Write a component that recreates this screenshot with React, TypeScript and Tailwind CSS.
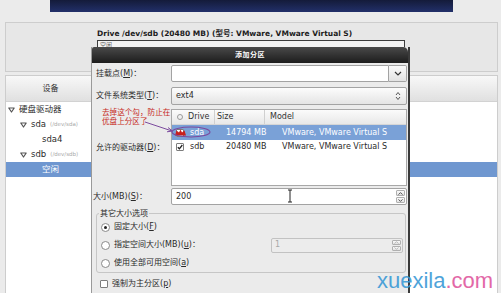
import React from "react";

const FONT = "font-['DejaVu_Sans','Noto_Sans_CJK_SC',sans-serif]";

function Tri() {
  return (
    <svg width="7" height="6" viewBox="0 0 7 6" className="shrink-0">
      <path d="M0.8 1h5.4L3.5 5z" fill="none" stroke="#555" strokeWidth="1.2" strokeLinejoin="round" />
    </svg>
  );
}

function ChevronDown() {
  return (
    <svg width="8" height="5" viewBox="0 0 8 5">
      <path d="M1 1l3 3 3-3" fill="none" stroke="#333" strokeWidth="1.2" />
    </svg>
  );
}

function UpDown() {
  return (
    <svg width="6" height="10" viewBox="0 0 6 10">
      <path d="M1 4l2-2.5L5 4M1 6l2 2.5L5 6" fill="none" stroke="#555" strokeWidth="1" />
    </svg>
  );
}

function SpinButtons({ disabled }: { disabled?: boolean }) {
  const c = disabled ? "#b5b5b5" : "#444";
  return (
    <div className="flex flex-col w-[9px] h-full mr-[1px] py-[1px] gap-[1px]">
      <div className="flex-1 flex items-center justify-center border border-[#b0b0b0] rounded-[1px] bg-gradient-to-b from-[#fbfbfb] to-[#e2e2e2]">
        <svg width="5" height="3" viewBox="0 0 5 3">
          <path d="M0.5 2.6L2.5 0.6l2 2" fill="none" stroke={c} strokeWidth="0.9" />
        </svg>
      </div>
      <div className="flex-1 flex items-center justify-center border border-[#b0b0b0] rounded-[1px] bg-gradient-to-b from-[#fbfbfb] to-[#e2e2e2]">
        <svg width="5" height="3" viewBox="0 0 5 3">
          <path d="M0.5 0.4L2.5 2.4l2-2" fill="none" stroke={c} strokeWidth="0.9" />
        </svg>
      </div>
    </div>
  );
}

function Check({ checked }: { checked?: boolean }) {
  return (
    <div className="w-[8px] h-[8px] border border-[#7d7d7d] bg-white rounded-[1px] flex items-center justify-center shrink-0">
      {checked && (
        <svg width="6" height="6" viewBox="0 0 6 6">
          <path d="M0.8 3.2l1.6 1.6L5.3 1" fill="none" stroke="#222" strokeWidth="1.3" />
        </svg>
      )}
    </div>
  );
}

function Radio({ on }: { on?: boolean }) {
  return (
    <div className="w-[9px] h-[9px] rounded-full border border-[#8a8a8a] bg-white flex items-center justify-center shrink-0">
      {on && <div className="w-[3px] h-[3px] rounded-full bg-[#222]" />}
    </div>
  );
}

function TreeRow({
  indent,
  tri,
  label,
  sub,
  selected,
}: {
  indent: number;
  tri?: boolean;
  label: string;
  sub?: string;
  selected?: boolean;
}) {
  return (
    <div className={`flex h-[15px] ${selected ? "bg-[#6f97d0]" : ""}`}>
      <div
        className={`w-[90px] flex items-center text-[8.5px] ${selected ? "text-white" : "text-[#2b2b2b]"}`}
        style={{ paddingLeft: indent }}
      >
        {tri && <Tri />}
        <span className={tri ? "ml-[4px]" : ""}>{label}</span>
        {sub && <span className="ml-[4px] text-[5.5px] text-[#a9a9a9]">{sub}</span>}
      </div>
      <div className="flex-1" />
    </div>
  );
}

export default function App() {
  return (
    <div className={`relative w-[501px] h-[293px] overflow-hidden bg-[#ebebeb] text-[#2a2a2a] ${FONT}`}>
      {/* top banner */}
      <div className="ml-[50px] w-[403px] h-[12px] bg-gradient-to-b from-[#141b3a] to-[#22306a]" />

      {/* upper panel */}
      <div className="mt-[10px] ml-[5px] w-[493px] h-[50px] border border-[#cdcdcd] bg-[#e7e7e7] pl-[91px] pt-[5px]">
        <div className="text-[7.5px] font-bold leading-[11px] text-[#1c1c1c] whitespace-nowrap">
          Drive /dev/sdb (20480 MB) (型号: VMware, VMware Virtual S)
        </div>
        <div className="mt-[1px] w-[308px] h-[20px] border border-[#3d3d3d] bg-[#f4f4f4] pl-[2px] text-[6px] leading-[7px] text-[#666]">
          空闲
        </div>
      </div>

      {/* lower panel */}
      <div className="mt-[3px] ml-[5px] w-[493px] h-[230px] border border-[#cdcdcd] bg-white">
        <div className="flex h-[26px] border-b border-[#d2d2d2] bg-gradient-to-b from-[#f8f8f8] to-[#e0e0e0]">
          <div className="w-[90px] border-r border-[#d0d0d0] flex items-center justify-center text-[8px] text-[#333]">
            设备
          </div>
          <div className="flex-1" />
        </div>
        <div className="flex flex-col">
          <TreeRow indent={2} tri label="硬盘驱动器" />
          <TreeRow indent={14} tri label="sda" sub="(/dev/sda)" />
          <TreeRow indent={36} label="sda4" />
          <TreeRow indent={14} tri label="sdb" sub="(/dev/sdb)" />
          <TreeRow indent={36} label="空闲" selected />
        </div>
      </div>

      {/* dialog */}
      <div className="absolute left-[91px] top-[47px] w-[319px] h-[250px] bg-[#ebebeb] border-l border-l-[#9a9a9a] border-r-2 border-r-[#3a3a3a]">
        <div className="h-[16px] rounded-tr-[5px] rounded-tl-[2px] bg-gradient-to-b from-[#4a4a4a] to-[#1d1d1d] flex items-center justify-center text-white text-[7px] font-bold tracking-[0.5px]">
          添加分区
        </div>
        <div className="pl-[4px] text-[8px]">
          {/* mount point */}
          <div className="mt-[2px] h-[17px] flex items-center">
            <div className="w-[75px] whitespace-nowrap">
              挂载点(<u>M</u>)：
            </div>
            <div className="flex w-[236px] h-full">
              <div className="flex-1 bg-white border border-[#a3a3a3] rounded-l-[2px]" />
              <div className="w-[18px] border border-l-0 border-[#a3a3a3] rounded-r-[2px] bg-gradient-to-b from-[#fafafa] to-[#e2e2e2] flex items-center justify-center">
                <ChevronDown />
              </div>
            </div>
          </div>
          {/* fs type */}
          <div className="mt-[5px] h-[18px] flex items-center">
            <div className="w-[75px] whitespace-nowrap">
              文件系统类型(<u>T</u>)：
            </div>
            <div className="flex items-center w-[236px] h-full border border-[#a3a3a3] rounded-[2px] bg-gradient-to-b from-[#fcfcfc] to-[#e4e4e4] pl-[4px] pr-[5px]">
              <span className="flex-1">ext4</span>
              <UpDown />
            </div>
          </div>
          {/* drives */}
          <div className="mt-[4px] h-[77px] flex items-center">
            <div className="w-[75px] whitespace-nowrap">
              允许的驱动器(<u>D</u>)：
            </div>
            <div className="w-[236px] h-full border border-[#a8a8a8] bg-white">
              <div className="flex h-[15px] items-center border-b border-[#d6d6d6] bg-gradient-to-b from-[#fbfbfb] to-[#e8e8e8] text-[#333]">
                <div className="w-[15px] flex justify-center">
                  <div className="w-[6px] h-[6px] rounded-full border border-[#9a9a9a]" />
                </div>
                <div className="w-[28px] h-full flex items-center border-r border-[#d0d0d0] pl-[1px]">Drive</div>
                <div className="w-[50px] h-full flex items-center border-r border-[#d0d0d0] pl-[2px]">Size</div>
                <div className="flex-1 pl-[5px]">Model</div>
              </div>
              <div className="flex h-[15px] items-center bg-[#7aa1d7] text-white">
                <div className="w-[15px] flex justify-center">
                  <Check />
                </div>
                <div className="w-[28px] pl-[3px]">sda</div>
                <div className="w-[50px] pl-[11px] whitespace-nowrap">14794 MB</div>
                <div className="flex-1 pl-[17px] whitespace-nowrap">VMware, VMware Virtual S</div>
              </div>
              <div className="flex h-[14px] items-center">
                <div className="w-[15px] flex justify-center">
                  <Check checked />
                </div>
                <div className="w-[28px] pl-[3px]">sdb</div>
                <div className="w-[50px] pl-[11px] whitespace-nowrap">20480 MB</div>
                <div className="flex-1 pl-[17px] whitespace-nowrap">VMware, VMware Virtual S</div>
              </div>
            </div>
          </div>
          {/* size */}
          <div className="mt-[2px] h-[17px] flex items-center">
            <div className="w-[75px] -ml-[3px] mr-[3px] whitespace-nowrap">
              大小(MB)(<u>S</u>)：
            </div>
            <div className="flex items-center w-[236px] h-full border border-[#a3a3a3] rounded-[2px] bg-white pl-[4px]">
              <span className="flex-1">200</span>
              <SpinButtons />
            </div>
          </div>
          {/* other size options */}
          <div className="relative mt-[8px] w-[310px] h-[60px] border border-[#c6c6c6] rounded-[3px]">
            <span className="absolute -top-[6px] left-[2px] px-[1px] bg-[#ebebeb] leading-[11px]">其它大小选项</span>
            <div className="pt-[4px] pl-[4px]">
              <div className="h-[18px] flex items-center gap-[4px]">
                <Radio on />
                <span>
                  固定大小(<u>F</u>)
                </span>
              </div>
              <div className="h-[18px] flex items-center gap-[4px]">
                <Radio />
                <span>
                  指定空间大小(MB)(<u>u</u>)：
                </span>
                <div className="ml-auto mr-[2px] w-[132px] h-[15px] flex items-center border border-[#c2c2c2] rounded-[2px] bg-[#ececec] pl-[3px] text-[#a8a8a8]">
                  <span className="flex-1">1</span>
                  <SpinButtons disabled />
                </div>
              </div>
              <div className="h-[18px] flex items-center gap-[4px]">
                <Radio />
                <span>
                  使用全部可用空间(<u>a</u>)
                </span>
              </div>
            </div>
          </div>
          {/* primary */}
          <div className="mt-[4px] h-[14px] flex items-center gap-[4px] pl-[4px]">
            <Check />
            <span>
              强制为主分区(<u>p</u>)
            </span>
          </div>
        </div>
      </div>

      {/* annotation text */}
      <div className="absolute left-[102px] top-[108px] text-[7.6px] leading-[9px] text-[#c62a22] whitespace-nowrap">
        <div>去掉这个勾，防止在</div>
        <div>优盘上分区了</div>
      </div>

      {/* annotation drawing + cursor */}
      <svg className="absolute inset-0 pointer-events-none" width="501" height="293" viewBox="0 0 501 293">
        <path d="M175 135.5l1.5-5 2.5 2 1.5-3 1.5 3 2.5-2 1.5 5z" fill="#c8201c" />
        <ellipse cx="191" cy="132" rx="19" ry="5" fill="none" stroke="#7b4a9e" strokeWidth="1.1" />
        <path d="M145 122L172 131" stroke="#7b4a9e" strokeWidth="1" />
        <path d="M168 127.5l4.5 3.5-5.5 0.8" fill="none" stroke="#7b4a9e" strokeWidth="1" />
        <path d="M288 190h4M290 190v12M288 202h4" stroke="#222" strokeWidth="1" />
      </svg>

      {/* watermark */}
      <div className="absolute left-[377px] top-[270px] text-[22px] leading-[22px] font-['Liberation_Sans',sans-serif] whitespace-nowrap opacity-90">
        <span className="text-[#3b9ad6]">xuexila</span>
        <span className="text-[#e0589e]">.com</span>
      </div>
    </div>
  );
}
